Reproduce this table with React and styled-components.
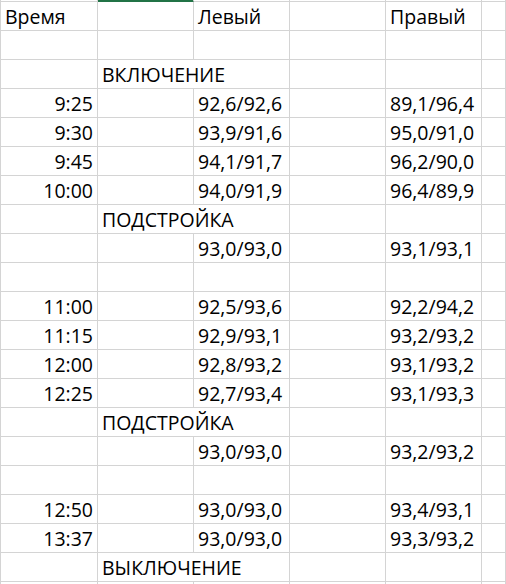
import styled, { createGlobalStyle } from "styled-components";

const GlobalStyle = createGlobalStyle`
	html, body {
		margin: 0;
		padding: 0;
		background: #ffffff;
	}
	body {
		font-family: "Open Sans", "Noto Sans", sans-serif;
		overflow: hidden;
	}
`;

const rows = [
	{ a: "Время", c: "Левый", e: "Правый", header: true },
	{},
	{ label: "ВКЛЮЧЕНИЕ" },
	{ a: "9:25", c: "92,6/92,6", e: "89,1/96,4" },
	{ a: "9:30", c: "93,9/91,6", e: "95,0/91,0" },
	{ a: "9:45", c: "94,1/91,7", e: "96,2/90,0" },
	{ a: "10:00", c: "94,0/91,9", e: "96,4/89,9" },
	{ label: "ПОДСТРОЙКА" },
	{ c: "93,0/93,0", e: "93,1/93,1" },
	{},
	{ a: "11:00", c: "92,5/93,6", e: "92,2/94,2" },
	{ a: "11:15", c: "92,9/93,1", e: "93,2/93,2" },
	{ a: "12:00", c: "92,8/93,2", e: "93,1/93,2" },
	{ a: "12:25", c: "92,7/93,4", e: "93,1/93,3" },
	{ label: "ПОДСТРОЙКА" },
	{ c: "93,0/93,0", e: "93,2/93,2" },
	{},
	{ a: "12:50", c: "93,0/93,0", e: "93,4/93,1" },
	{ a: "13:37", c: "93,0/93,0", e: "93,3/93,2" },
	{ label: "ВЫКЛЮЧЕНИЕ" },
	{},
];

export default function App() {
	return (
		<>
			<GlobalStyle />
			<Sheet>
				<Edge />
				<Edge $selected />
				<Edge />
				<Edge />
				<Edge />
				<Edge />
				{rows.map((row, i) => (
					<Row key={i} row={row} first={i === 0} />
				))}
			</Sheet>
		</>
	);
}

function Row({ row, first }) {
	const timeAlign = row.header ? "left" : "right";
	if (row.label) {
		return (
			<>
				<Cell $first={first} />
				<Cell $first={first} $span={2}>
					{row.label}
				</Cell>
				<Cell $first={first} />
				<Cell $first={first} />
				<Cell $first={first} />
			</>
		);
	}
	return (
		<>
			<Cell $first={first} $align={timeAlign}>
				{row.a}
			</Cell>
			<Cell $first={first} $selected={first} />
			<Cell $first={first}>{row.c}</Cell>
			<Cell $first={first} />
			<Cell $first={first}>{row.e}</Cell>
			<Cell $first={first} />
		</>
	);
}

const Sheet = styled.div`
	display: grid;
	grid-template-columns: 97px 96px 96px 96px 96px 1fr;
	grid-auto-rows: min-content;
	border-left: 1px solid #d4d4d4;
	width: 506px;
	height: 584px;
	box-sizing: border-box;
	overflow: hidden;
	color: #000000;
`;

const Edge = styled.div`
	height: 1px;
	background: ${({ $selected }) => ($selected ? "#217346" : "transparent")};
	border-right: 1px solid #d4d4d4;
	box-sizing: border-box;
`;

const Cell = styled.div`
	grid-column: span ${({ $span }) => $span || 1};
	height: ${({ $first }) => ($first ? "30px" : "29px")};
	box-sizing: border-box;
	border-right: 1px solid #d4d4d4;
	border-bottom: 1px solid #d4d4d4;
	border-top: ${({ $first, $selected }) =>
		$first ? `1px solid ${$selected ? "#217346" : "#d4d4d4"}` : "none"};
	padding: 1px 4px 0 4px;
	font-size: 19.5px;
	line-height: 28px;
	text-align: ${({ $align }) => $align || "left"};
	white-space: nowrap;
	overflow: visible;
`;
